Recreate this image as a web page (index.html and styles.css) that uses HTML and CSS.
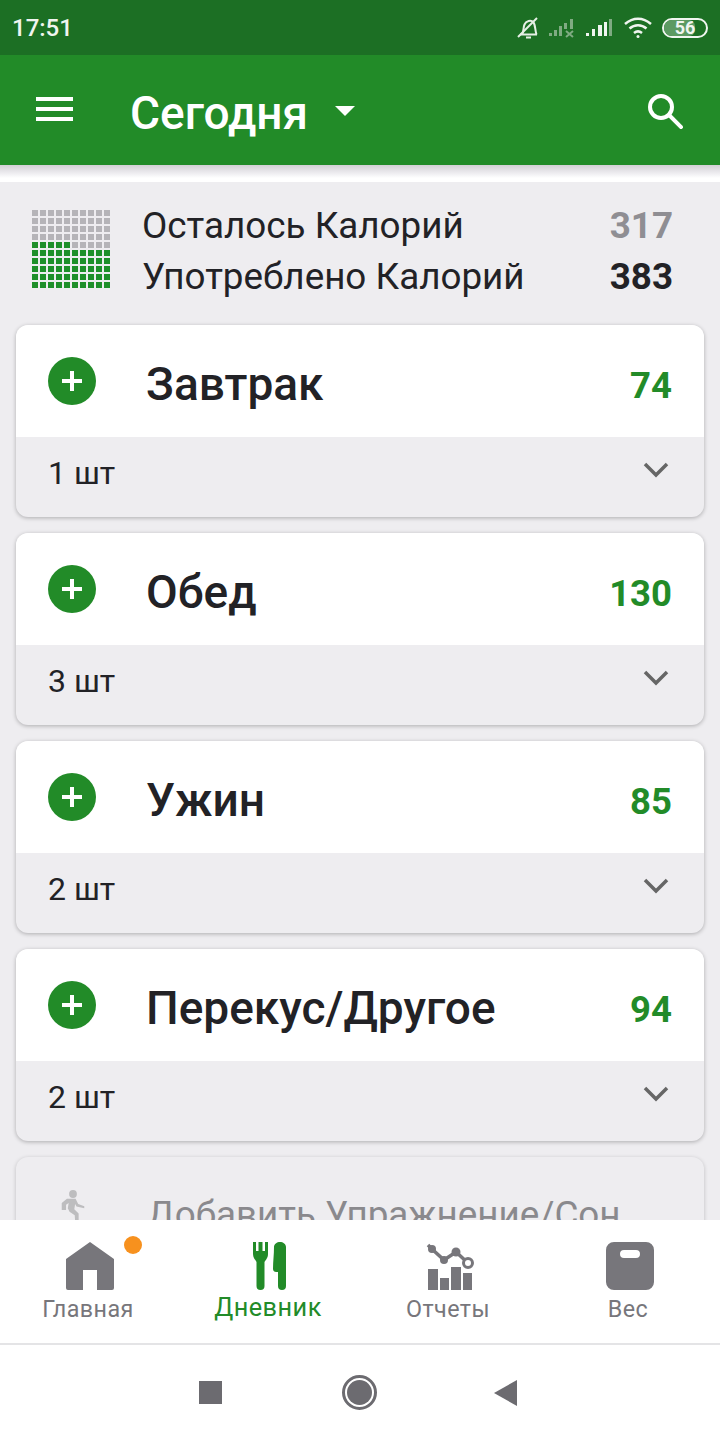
FILE: index.html
```html
<!DOCTYPE html>
<html lang="ru">
<head>
<meta charset="utf-8">
<title>Дневник</title>
<link rel="stylesheet" href="styles.css">
</head>
<body>
<div class="page">
  <div class="status">
    <span class="time">17:51</span>
    <div class="status-icons">
      <svg class="s-bell" width="24" height="24" viewBox="0 0 24 24" fill="none" stroke="#e6f0e6" stroke-width="2"><path d="M4 18.500h17M6 18c2-2 1-6 2.500-9.500C10 5 15 3.500 17.500 6.500c2 2.500 1.500 8 3 12"/><path d="M10 21.500h5"/><path d="M2 21L21 2"/></svg>
      <svg class="s-sig" width="28" height="20" viewBox="0 0 28 20" fill="#7fab82"><rect x="0" y="15" width="3" height="3"/><rect x="5" y="12" width="3" height="6"/><rect x="10" y="8" width="3" height="10"/><rect x="15" y="5" width="3" height="6"/><rect x="21" y="1" width="3" height="10"/><path d="M17 13l7 6m0-6l-7 6" stroke="#7fab82" stroke-width="2"/></svg>
      <svg class="s-sig2" width="28" height="20" viewBox="0 0 28 20"><rect x="0" y="15" width="3" height="3" fill="#f0f5f0"/><rect x="6" y="11" width="3" height="7" fill="#f0f5f0"/><rect x="12" y="7" width="4" height="11" fill="#f0f5f0"/><rect x="18" y="4" width="3" height="14" fill="#f0f5f0"/><rect x="23" y="1" width="3" height="17" fill="#7fab82"/></svg>
      <svg class="s-wifi" width="28" height="22" viewBox="0 0 28 22" fill="none" stroke="#f0f5f0" stroke-width="2.500"><path d="M1 7c8-7 18-7 26 0"/><path d="M5.500 11.500c5-4.500 12-4.500 17 0"/><path d="M10 16c2.500-2 5.500-2 8 0"/><circle cx="14" cy="19.500" r="1.500" fill="#f0f5f0" stroke="none"/></svg>
      <div class="battery"><div class="battery-fill"></div><span class="battery-text">56</span></div>
    </div>
  </div>

  <header class="appbar">
    <div class="menu"><i></i><i></i><i></i></div>
    <h1 class="title">Сегодня</h1>
    <div class="caret"></div>
    <svg class="search" width="36" height="36" viewBox="0 0 36 36" fill="none" stroke="#fff" stroke-width="4"><circle cx="14" cy="14" r="11"/><path d="M22 22l12 12" stroke-linecap="square"/></svg>
  </header>
  <div class="appshadow"></div>

  <main class="content">
    <section class="summary">
      <div class="grid">
        <i></i><i></i><i></i><i></i><i></i><i></i><i></i><i></i><i></i><i></i>
        <i></i><i></i><i></i><i></i><i></i><i></i><i></i><i></i><i></i><i></i>
        <i></i><i></i><i></i><i></i><i></i><i></i><i></i><i></i><i></i><i></i>
        <i></i><i></i><i></i><i></i><i></i><i></i><i></i><i></i><i></i><i></i>
        <b></b><b></b><b></b><b></b><b></b><i></i><i></i><i></i><i></i><i></i>
        <b></b><b></b><b></b><b></b><b></b><b></b><b></b><b></b><b></b><b></b>
        <b></b><b></b><b></b><b></b><b></b><b></b><b></b><b></b><b></b><b></b>
        <b></b><b></b><b></b><b></b><b></b><b></b><b></b><b></b><b></b><b></b>
        <b></b><b></b><b></b><b></b><b></b><b></b><b></b><b></b><b></b><b></b>
        <b></b><b></b><b></b><b></b><b></b><b></b><b></b><b></b><b></b><b></b>
      </div>
      <div class="totals">
        <div class="total-row"><span>Осталось Калорий</span><span class="left">317</span></div>
        <div class="total-row"><span>Употреблено Калорий</span><span class="used">383</span></div>
      </div>
    </section>

    <article class="card">
      <div class="card-head"><span class="plus"></span><h2 class="meal">Завтрак</h2><span class="kcal">74</span></div>
      <div class="card-foot"><span>1 шт</span><svg class="chev" width="26" height="16" viewBox="0 0 26 16" fill="none" stroke="#666" stroke-width="3.500"><path d="M2 2l11 11L24 2"/></svg></div>
    </article>
    <article class="card">
      <div class="card-head"><span class="plus"></span><h2 class="meal">Обед</h2><span class="kcal">130</span></div>
      <div class="card-foot"><span>3 шт</span><svg class="chev" width="26" height="16" viewBox="0 0 26 16" fill="none" stroke="#666" stroke-width="3.500"><path d="M2 2l11 11L24 2"/></svg></div>
    </article>
    <article class="card">
      <div class="card-head"><span class="plus"></span><h2 class="meal">Ужин</h2><span class="kcal">85</span></div>
      <div class="card-foot"><span>2 шт</span><svg class="chev" width="26" height="16" viewBox="0 0 26 16" fill="none" stroke="#666" stroke-width="3.500"><path d="M2 2l11 11L24 2"/></svg></div>
    </article>
    <article class="card">
      <div class="card-head"><span class="plus"></span><h2 class="meal">Перекус/Другое</h2><span class="kcal">94</span></div>
      <div class="card-foot"><span>2 шт</span><svg class="chev" width="26" height="16" viewBox="0 0 26 16" fill="none" stroke="#666" stroke-width="3.500"><path d="M2 2l11 11L24 2"/></svg></div>
    </article>
    <article class="card card-add">
      <svg class="walker" width="26" height="34" viewBox="0 0 30 39" fill="#bdbdbf"><circle cx="15" cy="4.500" r="4.500"/><path d="M8 10h10l3 6 7 2.500v2.500l-9-2-1.500-3-1 6 5 5v10h-4l-.500-8-6-4-2-4 1-6-3 2v6H2v-8z"/></svg>
      <span class="add-text">Добавить Упражнение/Сон</span>
    </article>
  </main>

  <nav class="tabs">
    <div class="tab">
      <div class="tab-icon">
        <svg width="48" height="48" viewBox="0 0 48 48" fill="#77767b"><path d="M24 0L48 17V46a2 2 0 0 1-2 2H31V28H17V48H2a2 2 0 0 1-2-2V17z"/></svg>
        <span class="dot"></span>
      </div>
      <span class="tab-label">Главная</span>
    </div>
    <div class="tab tab-active">
      <div class="tab-icon">
        <svg width="34" height="48" viewBox="0 0 34 48" fill="#228b28"><path d="M0 0h3v9h2.500V0h4v9H12V0h3v12c0 4-2.500 6-3.500 8v24a4 4 0 0 1-8 0V20C2.500 18 0 16 0 12z"/><path d="M21 5c0-3 3-5 6-5s6 2 6 5v39a4 4 0 0 1-8 0V30h-2c-1.500 0-3-1-3-3 0-8 1-14 1-22z"/></svg>
      </div>
      <span class="tab-label">Дневник</span>
    </div>
    <div class="tab">
      <div class="tab-icon">
        <svg width="48" height="48" viewBox="0 0 48 48" fill="#77767b"><path d="M2 3l5 5 11 10 12-8 12 11" fill="none" stroke="#77767b" stroke-width="3.500"/><circle cx="6" cy="7" r="4"/><circle cx="18" cy="18" r="4"/><circle cx="30" cy="10" r="4.500"/><circle cx="42" cy="21" r="4.500" fill="#fff" stroke="#77767b" stroke-width="3"/><rect x="2" y="27" width="10" height="21"/><rect x="14" y="36" width="9" height="12"/><rect x="25" y="25" width="10" height="23"/><rect x="37" y="31" width="9" height="17"/></svg>
      </div>
      <span class="tab-label">Отчеты</span>
    </div>
    <div class="tab">
      <div class="tab-icon">
        <svg width="48" height="48" viewBox="0 0 48 48" fill="#77767b"><path fill-rule="evenodd" d="M8 0h32a8 8 0 0 1 8 8v32a8 8 0 0 1-8 8H8a8 8 0 0 1-8-8V8a8 8 0 0 1 8-8zM18 8a4 4 0 0 0 0 8h12a4 4 0 0 0 0-8z"/></svg>
      </div>
      <span class="tab-label">Вес</span>
    </div>
  </nav>

  <div class="sysnav">
    <span class="sys-square"></span>
    <span class="sys-circle"><span class="sys-core"></span></span>
    <span class="sys-back"></span>
  </div>
</div>
</body>
</html>
```
FILE: styles.css
```css
* { box-sizing: border-box; }
html, body { margin: 0; padding: 0; }
body { font-family: Roboto, "Noto Sans", sans-serif; background: #fff; }
.page { width: 720px; height: 1440px; display: flex; flex-direction: column; overflow: hidden; color: #222226; }

.status { height: 55px; flex: none; background: #1c6f24; display: flex; align-items: center; justify-content: space-between; padding: 0 12px 0 12px; color: #f0f5f0; }
.time { font-size: 24px; font-weight: 500; }
.status-icons { display: flex; align-items: center; }
.s-bell { margin-right: 9px; }
.s-sig { margin-right: 9px; }
.s-sig2 { margin-right: 10px; }
.s-wifi { margin-right: 10px; }
.battery { position: relative; width: 46px; height: 20px; border: 2px solid #f0f5f0; border-radius: 10px; overflow: hidden; display: flex; align-items: center; justify-content: center; }
.battery-fill { position: absolute; left: 0; top: 0; bottom: 0; width: 74%; background: #5c9a62; border-radius: 0 6px 6px 0; }
.battery-text { position: relative; font-size: 18px; font-weight: 700; line-height: 1; color: #f0f5f0; }

.appbar { height: 110px; flex: none; background: #228b28; display: flex; align-items: center; padding: 0 36px; color: #fff; }
.menu { width: 37px; display: flex; flex-direction: column; gap: 6px; margin-right: 57px; margin-top: -2px; }
.menu i { display: block; height: 4px; background: #fff; }
.title { margin: 5px 0 0; font-size: 46px; font-weight: 500; line-height: 1; }
.caret { width: 0; height: 0; margin-left: 27px; margin-top: 2px; border-left: 10px solid transparent; border-right: 10px solid transparent; border-top: 10px solid #fff; }
.search { margin-left: auto; margin-right: 1px; margin-top: 1px; }
.appshadow { height: 17px; flex: none; background: linear-gradient(#d2d0d5 0, #f1f0f3 9px, #fff 13px); }

.content { flex: 1; min-height: 0; overflow: hidden; background: #eeedf0; padding: 0 16px; display: flex; flex-direction: column; gap: 16px; }
.summary { height: 143px; flex: none; display: flex; align-items: flex-start; margin-bottom: -16px; padding: 23px 31px 0 15px; }
.grid { width: 78px; flex: none; display: grid; grid-template-columns: repeat(10, 6px); grid-auto-rows: 6px; gap: 2px; margin: 5px 32px 0 1px; }
.grid i { background: #b5b4b8; }
.grid b { background: #1f8f2a; }
.totals { flex: 1; display: flex; flex-direction: column; gap: 9px; font-size: 36.800px; line-height: 42px; }
.total-row { display: flex; justify-content: space-between; }
.left { color: #8f8e93; font-weight: 700; }
.used { font-weight: 700; color: #222226; }

.card { flex: none; background: #eeedf0; border-radius: 12px; overflow: hidden; box-shadow: 0 1px 4px rgba(0,0,0,.28); }
.card-head { height: 112px; background: #fff; display: flex; align-items: flex-start; padding: 32px 32px 0 32px; }
.plus { width: 48px; height: 48px; flex: none; border-radius: 50%; background: #228b28; position: relative; margin-right: 50px; }
.plus::before, .plus::after { content: ""; position: absolute; background: #fff; }
.plus::before { left: 14px; right: 14px; top: 22px; height: 4px; }
.plus::after { top: 14px; bottom: 14px; left: 22px; width: 4px; }
.meal { margin: 0; flex: 1; font-size: 46px; font-weight: 500; line-height: 54px; color: #222226; }
.kcal { font-size: 36.500px; font-weight: 700; color: #228b28; line-height: 56px; margin-top: 1px; }
.card-foot { height: 80px; display: flex; align-items: flex-start; justify-content: space-between; padding: 16px 35px 0 32px; font-size: 32px; line-height: 40px; color: #222226; }
.chev { margin-top: 9px; }
.card-add { height: 120px; display: flex; align-items: flex-start; padding: 33px 0 0 44px; box-shadow: 0 1px 4px rgba(0,0,0,.2); }
.walker { margin-right: 61px; flex: none; }
.add-text { font-size: 36.800px; line-height: 44px; color: #8a898d; white-space: nowrap; margin-top: 3px; }

.tabs { height: 125px; flex: none; background: #fff; display: grid; grid-template-columns: repeat(4, 1fr); border-bottom: 2px solid #e4e4e6; padding-top: 22px; }
.tab { display: flex; flex-direction: column; align-items: center; color: #77767b; }
.tab-icon { position: relative; height: 48px; }
.tab-icon svg { display: block; }
.tab-label { font-size: 23.300px; line-height: 30px; margin: 4px 4px 0 0; letter-spacing: .45px; }
.tab-active { color: #228b28; }
.tab-active .tab-label { font-size: 25.300px; margin-top: 3px; }
.dot { position: absolute; width: 18px; height: 18px; border-radius: 50%; background: #f7911e; left: 58px; top: -6px; }

.sysnav { height: 95px; flex: none; background: #fff; display: flex; align-items: center; padding-left: 199px; }
.sys-square { width: 23px; height: 23px; background: #6c6b70; margin-right: 120px; }
.sys-circle { width: 35px; height: 35px; border: 3px solid #6c6b70; border-radius: 50%; display: flex; align-items: center; justify-content: center; margin-right: 117px; flex: none; }
.sys-core { width: 25px; height: 25px; border-radius: 50%; background: #6c6b70; }
.sys-back { width: 0; height: 0; border-top: 13px solid transparent; border-bottom: 13px solid transparent; border-right: 23px solid #6c6b70; }
```
